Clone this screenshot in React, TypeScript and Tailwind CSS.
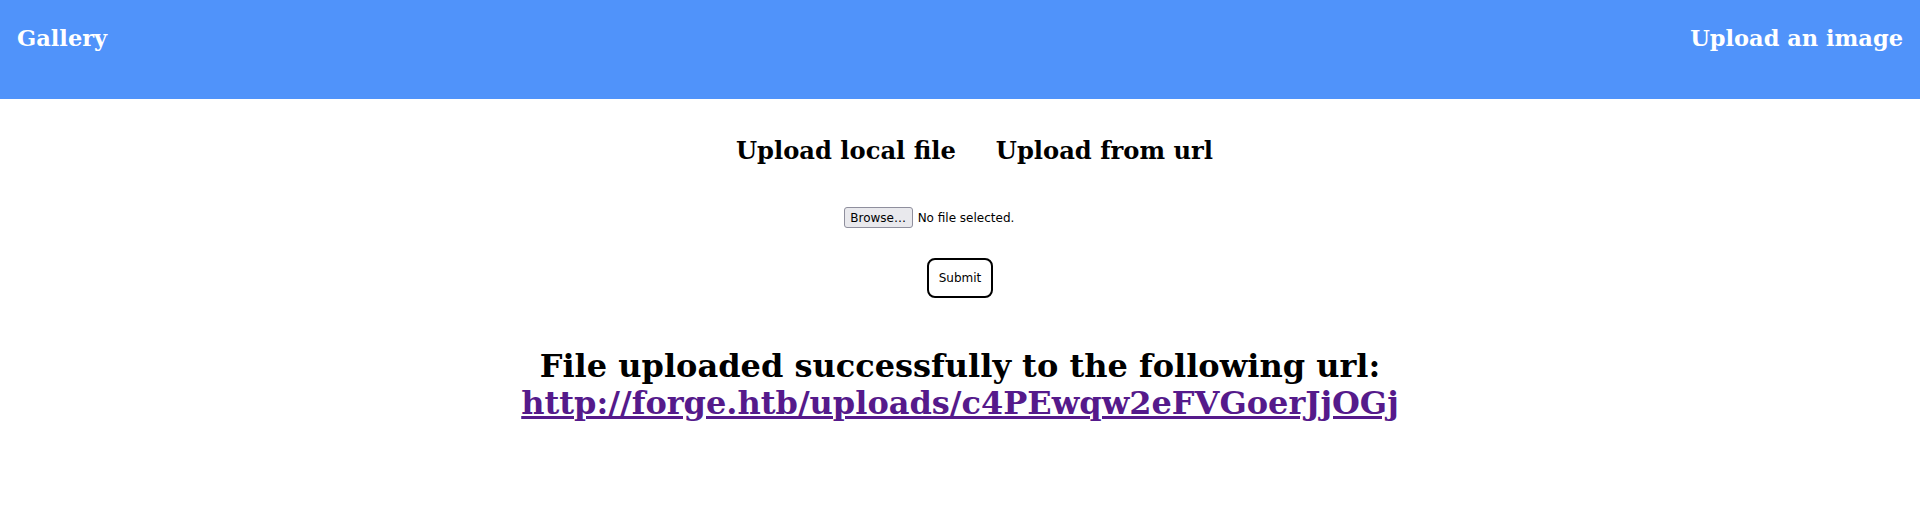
import * as React from 'react'

const App: React.FunctionComponent = () => {
  return (
    <div className="min-h-screen w-full bg-white font-['DejaVu_Serif',serif]">
      <header className="flex h-[99px] w-full flex-row items-start justify-between bg-[#5093fa] px-[17px] pt-[25px]">
        <a className="cursor-pointer text-[22.5px] leading-[26px] font-bold text-white">Gallery</a>
        <a className="cursor-pointer text-[22.5px] leading-[26px] font-bold text-white">
          Upload an image
        </a>
      </header>

      <div className="flex flex-col items-center">
        <div className="mt-[38px] flex flex-row gap-10 pl-[29px]">
          <h2 className="text-[24.2px] leading-[28px] font-bold text-black">Upload local file</h2>
          <h2 className="text-[24.2px] leading-[28px] font-bold text-black">Upload from url</h2>
        </div>

        <form className="flex flex-col items-center">
          <div className="mt-[42px] flex flex-row items-center gap-[5px] pr-[62px] font-['DejaVu_Sans',sans-serif] text-[12px] text-black">
            <span className="flex h-[21px] w-[69px] items-center justify-center rounded-[3px] border border-[#8f8f9d] bg-[#e9e9ed]">
              Browse…
            </span>
            <span>No file selected.</span>
          </div>
          <button
            type="button"
            className="mt-[30px] h-10 w-[66px] rounded-lg border-2 border-black bg-white font-['DejaVu_Sans',sans-serif] text-[12px] text-black"
          >
            Submit
          </button>
        </form>

        <h1 className="mt-[50px] text-center text-[32px] leading-[37px] font-bold text-black">
          File uploaded successfully to the following url:
          <br />
          <a className="text-[#551a8b] underline">http://forge.htb/uploads/c4PEwqw2eFVGoerJjOGj</a>
        </h1>
      </div>
    </div>
  )
}

export default App
